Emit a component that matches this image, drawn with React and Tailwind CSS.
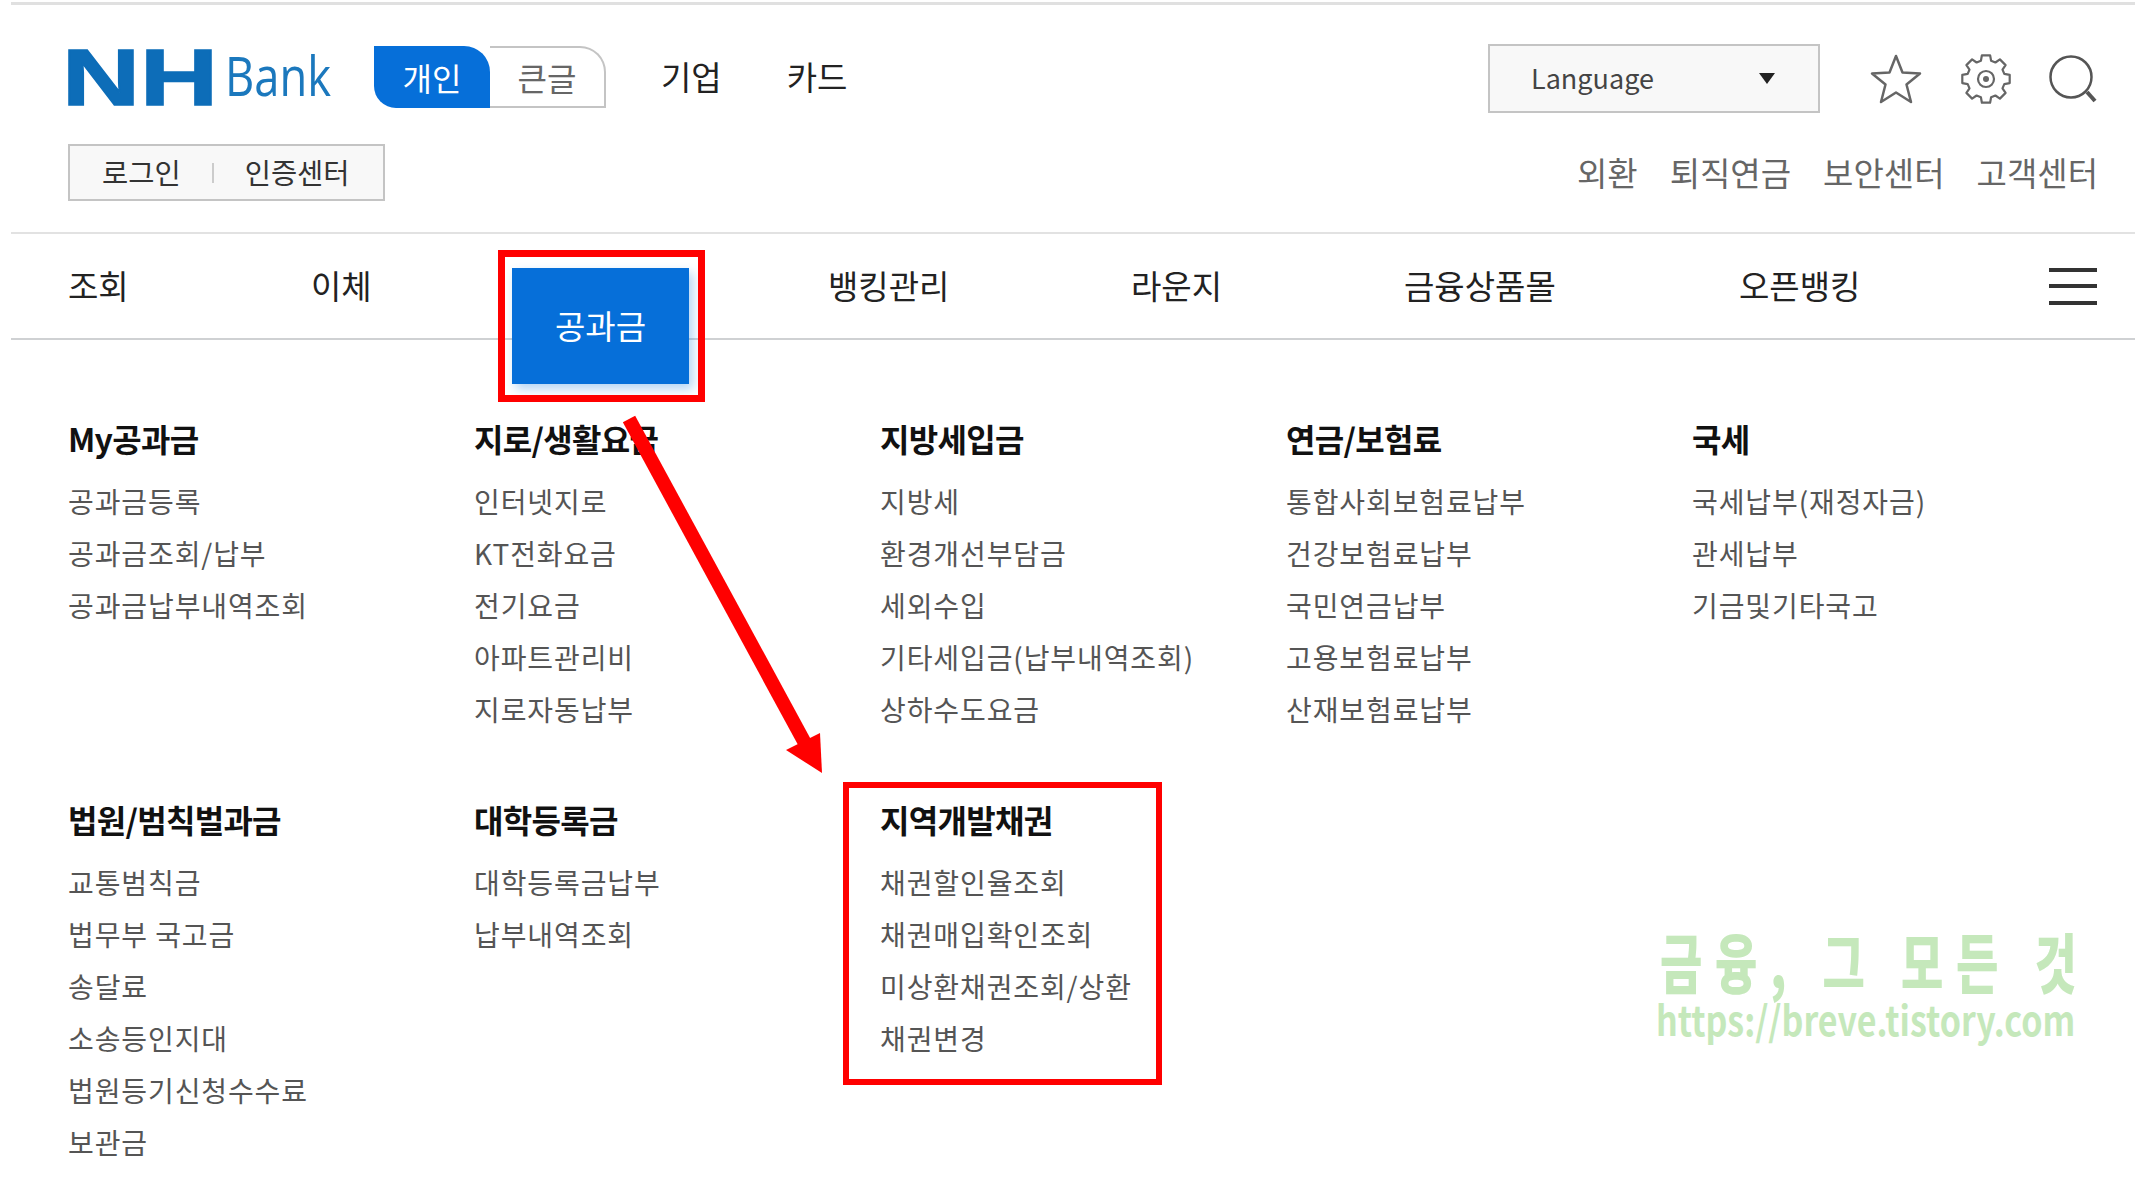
const FONT = { fontFamily: '"Noto Sans CJK KR", "Noto Sans", sans-serif' };

const MENU_ROWS = [
  [
    { title: "My공과금", items: ["공과금등록", "공과금조회/납부", "공과금납부내역조회"] },
    { title: "지로/생활요금", items: ["인터넷지로", "KT전화요금", "전기요금", "아파트관리비", "지로자동납부"] },
    { title: "지방세입금", items: ["지방세", "환경개선부담금", "세외수입", "기타세입금(납부내역조회)", "상하수도요금"] },
    { title: "연금/보험료", items: ["통합사회보험료납부", "건강보험료납부", "국민연금납부", "고용보험료납부", "산재보험료납부"] },
    { title: "국세", items: ["국세납부(재정자금)", "관세납부", "기금및기타국고"] },
  ],
  [
    { title: "법원/범칙벌과금", items: ["교통범칙금", "법무부 국고금", "송달료", "소송등인지대", "법원등기신청수수료", "보관금"] },
    { title: "대학등록금", items: ["대학등록금납부", "납부내역조회"] },
    { title: "지역개발채권", items: ["채권할인율조회", "채권매입확인조회", "미상환채권조회/상환", "채권변경"] },
  ],
];

function Logo() {
  return (
    <svg width="266" height="60" viewBox="0 0 266 60" className="block overflow-visible">
      <text x="-6" y="58" textLength="156" lengthAdjust="spacingAndGlyphs" fill="#0d6db8" stroke="#0d6db8" strokeWidth="1.5" fontSize="80" fontWeight="700" fontFamily="Liberation Sans">
        NH
      </text>
      <text x="157" y="49" textLength="106" lengthAdjust="spacingAndGlyphs" fill="#1b78bd" fontSize="54" fontFamily="Open Sans">
        Bank
      </text>
    </svg>
  );
}

function StarIcon() {
  return (
    <svg width="52" height="50" viewBox="0 0 52 50" fill="none" stroke="#666" strokeWidth="2.5" strokeLinejoin="round">
      <path d="M26 2 L32.5 18.5 L50 19.5 L36.5 30.5 L41 48 L26 38.5 L11 48 L15.5 30.5 L2 19.5 L19.5 18.5 Z" />
    </svg>
  );
}

function gearPath() {
  const pts = [];
  for (let i = 0; i < 8; i++) {
    const a = (i * Math.PI) / 4 - Math.PI / 2;
    [[-0.27, 19], [-0.17, 24], [0.17, 24], [0.27, 19]].forEach(([da, r]) => {
      pts.push(`${(25 + r * Math.cos(a + da)).toFixed(1)} ${(25 + r * Math.sin(a + da)).toFixed(1)}`);
    });
  }
  return `M${pts.join("L")}Z`;
}

function GearIcon() {
  return (
    <svg width="50" height="50" viewBox="0 0 50 50" fill="none" stroke="#666" strokeWidth="2.2" strokeLinejoin="round">
      <path d={gearPath()} />
      <circle cx="25" cy="25" r="8" />
      <circle cx="25" cy="25" r="3" fill="#666" stroke="none" />
    </svg>
  );
}

function SearchIcon() {
  return (
    <svg width="48" height="48" viewBox="0 0 48 48" fill="none" stroke="#555">
      <circle cx="22" cy="22" r="20.500" strokeWidth="2.5" />
      <path d="M38 37 L46 46" strokeWidth="4" />
    </svg>
  );
}

function MenuGroup({ group }) {
  return (
    <div>
      <h3 className="text-[32px] leading-[44px] font-bold tracking-[-0.7px] text-[#111]">{group.title}</h3>
      <ul className="mt-[15px]">
        {group.items.map((item) => (
          <li key={item} className="text-[28px] leading-[52px] tracking-[0.9px] whitespace-nowrap text-[#555]">
            {item}
          </li>
        ))}
      </ul>
    </div>
  );
}

export default function App() {
  return (
    <div style={FONT} className="relative h-[1177px] w-[2135px] overflow-hidden bg-white pl-[11px]">
      <div className="h-[3px] mt-[2px] bg-[#e0e0e0]" />

      <div className="h-[227px] pl-[57px] pr-[38px]">
        <div className="flex items-start justify-between">
          <div className="flex items-center mt-[41px]">
            <Logo />
            <div className="flex ml-[40px] h-[62px] w-[232px]">
              <div className="flex w-[116px] items-center justify-center rounded-tr-[26px] rounded-bl-[22px] bg-[#066fd9] text-[32px] text-white">
                개인
              </div>
              <div className="flex flex-1 items-center justify-center rounded-tr-[26px] border-2 border-l-0 border-[#c4c4c4] text-[32px] text-[#666]">
                큰글
              </div>
            </div>
            <span className="ml-[55px] text-[33px] text-[#222]">기업</span>
            <span className="ml-[65px] text-[33px] text-[#222]">카드</span>
          </div>
          <div className="flex items-center mt-[39px]">
            <div className="flex h-[69px] w-[332px] items-center justify-between border-2 border-[#c4c4c4] bg-[#f8f8f8] pl-[41px] pr-[43px] text-[27px] text-[#444]">
              Language
              <span className="h-0 w-0 border-x-[8px] border-t-[11px] border-x-transparent border-t-[#222]" />
            </div>
            <div className="ml-[50px]"><StarIcon /></div>
            <div className="ml-[39px]"><GearIcon /></div>
            <div className="ml-[38px]"><SearchIcon /></div>
          </div>
        </div>

        <div className="flex items-center justify-between mt-[31px]">
          <div className="flex h-[57px] w-[317px] items-center border-2 border-[#c4c4c4] bg-[#f8f8f8] pl-[32px] text-[28.500px] text-[#333]">
            <span>로그인</span>
            <span className="mx-[31px] h-[20px] w-[2px] bg-[#ccc]" />
            <span>인증센터</span>
          </div>
          <div className="flex gap-[32px] text-[33px] text-[#666] -mr-[1px]">
            <span>외환</span>
            <span>퇴직연금</span>
            <span>보안센터</span>
            <span>고객센터</span>
          </div>
        </div>
      </div>

      <div className="h-[2px] bg-[#e2e2e2]" />

      <nav className="flex h-[104px] items-center pl-[57px] pr-[38px] text-[33px] text-[#222]">
        <span className="w-[243px]">조회</span>
        <span className="w-[201px]">이체</span>
        <span className="relative z-10 flex h-[116px] w-[177px] mt-[79px] items-center justify-center bg-[#066fd9] text-white shadow-[4px_5px_10px_rgba(6,111,217,0.3)]">
          공과금
        </span>
        <span className="ml-[139px] w-[303px]">뱅킹관리</span>
        <span className="w-[273px]">라운지</span>
        <span className="w-[335px]">금융상품몰</span>
        <span>오픈뱅킹</span>
        <span className="ml-auto flex h-[37px] w-[48px] flex-col justify-between">
          <i className="h-[4px] bg-[#333]" />
          <i className="h-[4px] bg-[#333]" />
          <i className="h-[4px] bg-[#333]" />
        </span>
      </nav>

      <div className="h-[2px] bg-[#cfd1d3]" />

      <div className="pl-[57px] pt-[76px]">
        {MENU_ROWS.map((row, i) => (
          <div key={i} className="grid h-[381px] grid-cols-[repeat(5,406px)]">
            {row.map((group) => (
              <MenuGroup key={group.title} group={group} />
            ))}
          </div>
        ))}
      </div>

      {/* annotations drawn over the page */}
      <div className="absolute left-[498px] top-[250px] z-20 h-[152px] w-[207px] border-[7px] border-[#ff0000]" />
      <div className="absolute left-[843px] top-[782px] h-[303px] w-[319px] border-[6px] border-[#ff0000]" />
      <svg className="absolute left-0 top-0 z-20" width="2135" height="1177" fill="none">
        <path d="M629 419 L806 745" stroke="#ff0000" strokeWidth="14" />
        <path d="M822 773 L786 750 L820 733 Z" fill="#ff0000" />
      </svg>

      <div className="absolute left-[1656px] top-[925px] text-[#c5e8bb]">
        <div className="pl-[4px] text-[46px] leading-[50px] font-black tracking-[12.800px] whitespace-nowrap origin-top scale-y-[1.4]">금융, 그 모든 것</div>
        <div className="mt-[20px] text-[34px] leading-[40px] font-bold whitespace-nowrap origin-top scale-y-[1.2]">https://breve.tistory.com</div>
      </div>
    </div>
  );
}
